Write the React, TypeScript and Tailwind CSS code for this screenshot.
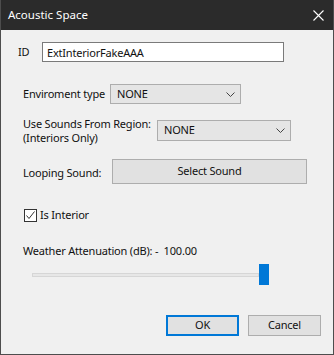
import React, { useState } from 'react'

function Chevron() {
  return (
    <svg width="9" height="5" viewBox="0 0 9 5" className="shrink-0">
      <path d="M0.5 0.5 L4.5 4.5 L8.5 0.5" fill="none" stroke="#444" strokeWidth="1" />
    </svg>
  )
}

function Combo({ value, width }: { value: string; width: string }) {
  return (
    <div className={`${width} h-full shrink-0 flex items-center justify-between bg-[#e5e5e5] border border-[#adadad] pl-[6px] pr-[5px]`}>
      <span>{value}</span>
      <Chevron />
    </div>
  )
}

export default function App() {
  const [interior, setInterior] = useState(true)
  const [id, setId] = useState('ExtInteriorFakeAAA')

  return (
    <div className="w-[334px] h-[355px] flex flex-col bg-[#f0f0f0] border-x border-b border-[#4d4d4d] text-[11px] tracking-[-0.2px] text-[#111] font-['Noto_Sans',sans-serif] whitespace-nowrap overflow-hidden">
      <div className="h-[30px] shrink-0 bg-[#2b2b2b] flex items-center justify-between pl-[8px] pr-[10px] -mx-px">
        <span className="text-white text-[11.5px] tracking-normal">Acoustic Space</span>
        <svg width="11" height="11" viewBox="0 0 11 11">
          <path d="M0.5 0.5 L10.5 10.5 M10.5 0.5 L0.5 10.5" stroke="#fff" strokeWidth="1.1" />
        </svg>
      </div>

      <div className="flex items-center h-[20px] mt-[12px] pl-[17px]">
        <span className="w-[24px] shrink-0">ID</span>
        <input
          value={id}
          onChange={e => setId(e.target.value)}
          className="w-[242px] h-full shrink-0 bg-white border border-[#7a7a7a] px-[4px] outline-none"
        />
      </div>

      <div className="flex items-center h-[20px] mt-[22px] pl-[22px]">
        <span className="w-[87px] shrink-0">Enviroment type</span>
        <Combo value="NONE" width="w-[131px]" />
      </div>

      <div className="flex items-center h-[21px] mt-[16px] pl-[22px]">
        <span className="w-[134px] shrink-0 leading-[13.5px]">Use Sounds From Region:<br />(Interiors Only)</span>
        <Combo value="NONE" width="w-[134px]" />
      </div>

      <div className="flex items-center h-[25px] mt-[18px] pl-[22px]">
        <span className="w-[89px] shrink-0 pt-[3px]">Looping Sound:</span>
        <button className="w-[195px] h-full shrink-0 bg-[#e1e1e1] border border-[#adadad]">Select Sound</button>
      </div>

      <label className="flex items-center h-[13px] mt-[25px] pl-[23px] gap-[3px]">
        <span
          onClick={() => setInterior(!interior)}
          className="w-[13px] h-[13px] shrink-0 bg-white border border-[#333] flex items-center justify-center"
        >
          {interior && (
            <svg width="11" height="11" viewBox="0 0 11 11">
              <path d="M1.5 5.5 L4 8.5 L9.5 1.5" fill="none" stroke="#333" strokeWidth="1" />
            </svg>
          )}
        </span>
        <span>Is Interior</span>
      </label>

      <div className="h-[14px] mt-[22px] pl-[22px] flex items-center whitespace-pre">Weather Attenuation (dB): -  100.00</div>

      <div className="flex items-center h-[21px] mt-[6px] pl-[31px]">
        <div className="w-[227px] h-[4px] shrink-0 bg-[#e7e7e7] border border-[#d6d6d6]" />
        <div className="w-[10px] h-[21px] shrink-0 bg-[#0078d7]" />
      </div>

      <div className="flex justify-end gap-[9px] h-[21px] mt-[30px] pr-[12px]">
        <button className="w-[73px] h-full bg-[#e1e1e1] border-2 border-[#0078d7]">OK</button>
        <button className="w-[73px] h-full bg-[#e1e1e1] border border-[#adadad]">Cancel</button>
      </div>
    </div>
  )
}
